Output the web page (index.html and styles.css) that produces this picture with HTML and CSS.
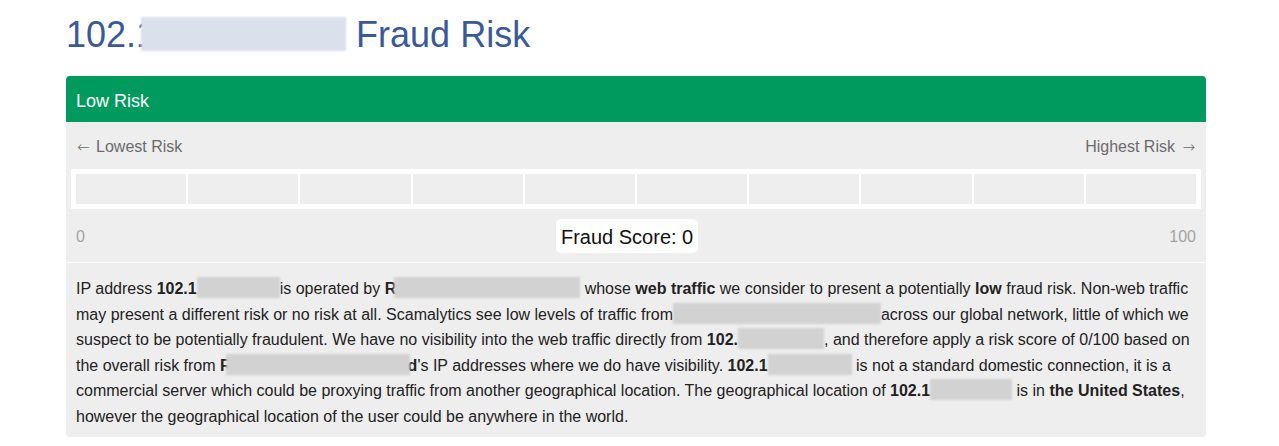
FILE: index.html
```html
<!DOCTYPE html>
<html lang="en">
<head>
<meta charset="utf-8">
<title>Fraud Risk</title>
<link rel="stylesheet" href="styles.css">
</head>
<body>
<div class="page">
  <h1 class="title">102.1<span class="redact-title"></span> Fraud Risk</h1>
  <div class="panel">
    <div class="panel-head">Low Risk</div>
    <div class="risk">
      <div class="risk-labels"><span><span class="arrow arrow-l">&larr;</span> Lowest Risk</span><span>Highest Risk <span class="arrow arrow-r">&rarr;</span></span></div>
      <div class="bar">
        <div class="seg"></div><div class="seg"></div><div class="seg"></div><div class="seg"></div><div class="seg"></div>
        <div class="seg"></div><div class="seg"></div><div class="seg"></div><div class="seg"></div><div class="seg"></div>
      </div>
      <div class="score-row">
        <span class="scale">0</span>
        <span class="score">Fraud Score: 0</span>
        <span class="scale">100</span>
      </div>
    </div>
    <div class="desc">
      <p>IP address <b>102.1</b><span class="redact r1"></span>is operated by <b>R</b><span class="redact r2"></span> whose <b>web traffic</b> we consider to present a potentially <b>low</b> fraud risk. Non-web traffic may present a different risk or no risk at all. Scamalytics see low levels of traffic from<span class="redact r3"></span>across our global network, little of which we suspect to be potentially fraudulent. We have no visibility into the web traffic directly from <b>102.</b><span class="redact r4"></span>, and therefore apply a risk score of 0/100 based on the overall risk from <b>R</b><span class="redact r5"></span><b>d</b>'s IP addresses where we do have visibility. <b>102.1</b><span class="redact r6"></span> is not a standard domestic connection, it is a commercial server which could be proxying traffic from another geographical location. The geographical location of <b>102.1</b><span class="redact r7"></span> is in <b>the United States</b>, however the geographical location of the user could be anywhere in the world.</p>
    </div>
  </div>
</div>
</body>
</html>
```
FILE: styles.css
```css
html, body {
  margin: 0;
  padding: 0;
  background: #ffffff;
}
body {
  font-family: "Liberation Sans", Arial, Helvetica, sans-serif;
  color: #222222;
}
.page {
  width: 1140px;
  margin-left: 66px;
}
.title {
  margin: 15px 0 21px 0;
  font-size: 36px;
  line-height: 40px;
  font-weight: normal;
  color: #3b5998;
}
.redact-title {
  display: inline-block;
  width: 205px;
  height: 34px;
  margin-left: -15px;
  vertical-align: -4px;
  background: #dbe0ed;
  filter: blur(1px);
  position: relative;
}
.panel {
  border-radius: 4px;
  overflow: hidden;
}
.panel-head {
  background: #009a5e;
  color: #ffffff;
  font-size: 18px;
  line-height: 22px;
  padding: 14px 10px 10px 10px;
  border-bottom: 1px solid #e8f5ee;
}
.risk {
  background: #eeeeee;
  padding: 13px 10px 9px 10px;
  border-bottom: 1px solid #ffffff;
}
.risk-labels {
  display: flex;
  justify-content: space-between;
  font-size: 16px;
  line-height: 22px;
  color: #6b6b6b;
}
.arrow {
  font-family: "DejaVu Sans", sans-serif;
  font-size: 15px;
  font-weight: 200;
}
.arrow-l { margin-left: 1px; margin-right: 2px; }
.arrow-r { margin-left: 3px; margin-right: 1px; }
.bar {
  display: flex;
  gap: 2px;
  margin: 11px -5px 0 -5px;
  padding: 5px;
  background: #ffffff;
}
.seg {
  flex: 1;
  height: 30px;
  background: #eeeeee;
}
.score-row {
  display: flex;
  justify-content: space-between;
  align-items: center;
  margin-top: 10px;
}
.scale {
  font-size: 16px;
  line-height: 22px;
  padding-top: 1px;
  color: #a3a3a3;
}
.score {
  background: #ffffff;
  border-radius: 5px;
  padding: 6px 5px 4px 5px;
  font-size: 20px;
  line-height: 24px;
  color: #111111;
}
.desc {
  background: #eeeeee;
  padding: 13px 10px 7px 10px;
}
.desc p {
  margin: 0;
  font-size: 16px;
  line-height: 25.6px;
}
.redact {
  display: inline-block;
  height: 21px;
  vertical-align: -4px;
  background: #d2d2d2;
  filter: blur(0.8px);
  position: relative;
}
.r1 { width: 83px; }
.r2 { width: 186px; margin-left: -2px; }
.r3 { width: 208px; }
.r4 { width: 86px; }
.r5 { width: 184px; margin-left: -6px; margin-right: -2px; }
.r6 { width: 84px; }
.r7 { width: 82px; }
```
